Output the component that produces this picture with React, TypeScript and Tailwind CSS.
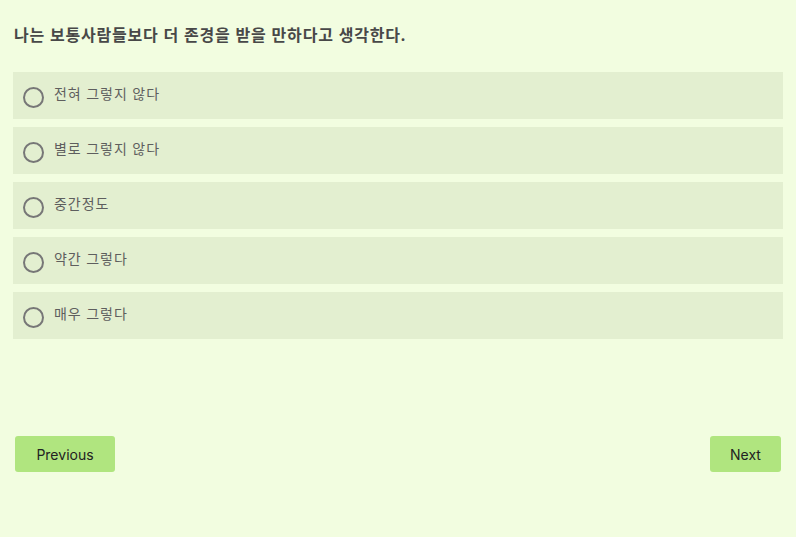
import { useState } from 'react';

const OPTIONS = ['전혀 그렇지 않다', '별로 그렇지 않다', '중간정도', '약간 그렇다', '매우 그렇다'];

export default function App() {
  const [picked, setPicked] = useState<number | null>(null);

  return (
    <main
      className="w-full min-h-[537px] bg-[#f2fde0] text-[#444]"
      style={{ fontFamily: '"Noto Sans", "Noto Sans CJK KR", sans-serif' }}
    >
      <div className="px-[13px] pt-[23px]">
        <h2 className="pl-px text-[16px] font-bold leading-[24px] tracking-[0.8px] text-[#484848]">
          나는 보통사람들보다 더 존경을 받을 만하다고 생각한다.
        </h2>

        {/* 선택지 */}
        <div className="mt-[25px] flex flex-col gap-2">
          {OPTIONS.map((label, i) => (
            <label
              key={label}
              className="flex h-[47px] cursor-pointer items-center bg-[#e3efd0] pl-[10px]"
              onClick={() => setPicked(i)}
            >
              <span className="mt-[3px] flex h-[21px] w-[21px] items-center justify-center rounded-full border-2 border-[#777]">
                {picked === i && <span className="h-[9px] w-[9px] rounded-full bg-[#777]" />}
              </span>
              <span className="ml-[10px] -mt-[4px] text-[14px] tracking-[0.95px] text-[#5e5e5e]">{label}</span>
            </label>
          ))}
        </div>
      </div>

      <div className="mt-[97px] flex justify-between px-[15px]">
        <button
          className="h-[36px] w-[100px] rounded-[3px] bg-[#b0e57f] text-[14px] text-[#222]"
          style={{ fontFamily: 'Inter, sans-serif' }}
        >
          Previous
        </button>
        <button
          className="h-[36px] w-[71px] rounded-[3px] bg-[#b0e57f] text-[14px] text-[#222]"
          style={{ fontFamily: 'Inter, sans-serif' }}
        >
          Next
        </button>
      </div>
    </main>
  );
}
